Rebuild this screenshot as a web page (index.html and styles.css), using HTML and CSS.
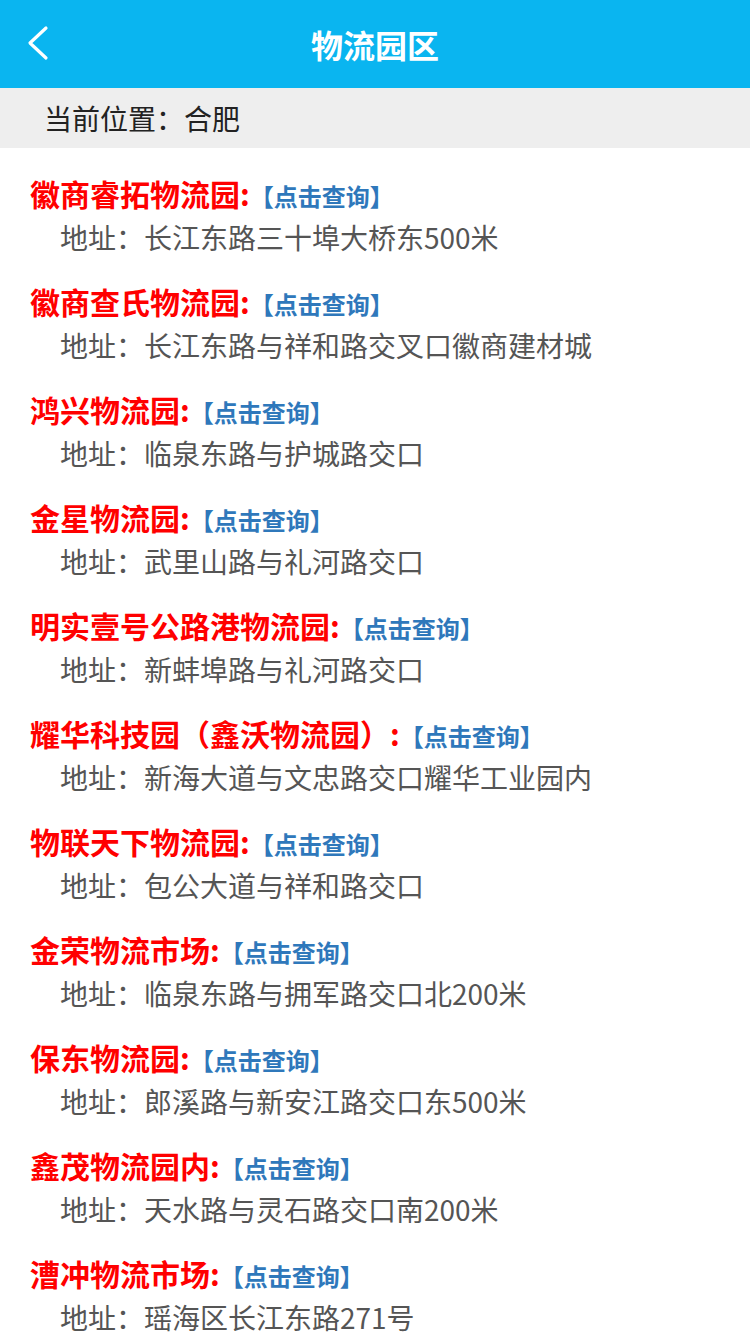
FILE: index.html
```html
<!DOCTYPE html>
<html lang="zh-CN">
<head>
<meta charset="utf-8">
<meta name="viewport" content="width=750">
<title>物流园区</title>
<link rel="stylesheet" href="styles.css">
</head>
<body>
<header class="topbar">
  <a class="back" href="#" aria-label="返回">
    <svg width="24" height="36" viewBox="0 0 24 36"><polyline points="20,3 4,18 20,33" fill="none" stroke="#fff" stroke-width="3.2" stroke-linecap="round" stroke-linejoin="round"/></svg>
  </a>
  <h1 class="title">物流园区</h1>
</header>
<div class="location">当前位置：合肥</div>
<ul class="list">
  <li class="item"><div class="name">徽商睿拓物流园:<a class="query" href="#">【点击查询】</a></div><div class="addr">地址：长江东路三十埠大桥东500米</div></li>
  <li class="item"><div class="name">徽商查氏物流园:<a class="query" href="#">【点击查询】</a></div><div class="addr">地址：长江东路与祥和路交叉口徽商建材城</div></li>
  <li class="item"><div class="name">鸿兴物流园:<a class="query" href="#">【点击查询】</a></div><div class="addr">地址：临泉东路与护城路交口</div></li>
  <li class="item"><div class="name">金星物流园:<a class="query" href="#">【点击查询】</a></div><div class="addr">地址：武里山路与礼河路交口</div></li>
  <li class="item"><div class="name">明实壹号公路港物流园:<a class="query" href="#">【点击查询】</a></div><div class="addr">地址：新蚌埠路与礼河路交口</div></li>
  <li class="item"><div class="name">耀华科技园（鑫沃物流园）:<a class="query" href="#">【点击查询】</a></div><div class="addr">地址：新海大道与文忠路交口耀华工业园内</div></li>
  <li class="item"><div class="name">物联天下物流园:<a class="query" href="#">【点击查询】</a></div><div class="addr">地址：包公大道与祥和路交口</div></li>
  <li class="item"><div class="name">金荣物流市场:<a class="query" href="#">【点击查询】</a></div><div class="addr">地址：临泉东路与拥军路交口北200米</div></li>
  <li class="item"><div class="name">保东物流园:<a class="query" href="#">【点击查询】</a></div><div class="addr">地址：郎溪路与新安江路交口东500米</div></li>
  <li class="item"><div class="name">鑫茂物流园内:<a class="query" href="#">【点击查询】</a></div><div class="addr">地址：天水路与灵石路交口南200米</div></li>
  <li class="item"><div class="name">漕冲物流市场:<a class="query" href="#">【点击查询】</a></div><div class="addr">地址：瑶海区长江东路271号</div></li>
</ul>
</body>
</html>
```
FILE: styles.css
```css
html, body {
  margin: 0;
  padding: 0;
  background: #fff;
  font-family: "Noto Sans CJK SC", "Noto Sans", sans-serif;
}
.topbar {
  position: relative;
  height: 88px;
  background: #0ab5f0;
  display: flex;
  align-items: center;
  justify-content: center;
}
.back {
  position: absolute;
  left: 26px;
  top: 25px;
  display: block;
  width: 24px;
  height: 36px;
}
.back svg { display: block; }
.title {
  margin: 0;
  color: #fff;
  font-size: 32px;
  font-weight: bold;
  line-height: 88px;
}
.location {
  height: 60px;
  line-height: 60px;
  background: #eeeeee;
  color: #222;
  font-size: 28px;
  padding-left: 44px;
}
.list {
  list-style: none;
  margin: 0;
  padding: 23px 0 0 30px;
}
.item {
  margin-bottom: 20px;
}
.name {
  height: 44px;
  line-height: 44px;
  font-size: 30px;
  font-weight: bold;
  color: #ff0000;
  white-space: nowrap;
}
.query {
  font-size: 24px;
  color: #2f78bb;
  text-decoration: none;
  font-weight: bold;
  vertical-align: baseline;
}
.addr {
  height: 44px;
  line-height: 44px;
  font-size: 28px;
  color: #555;
  padding-left: 30px;
  white-space: nowrap;
}
```
